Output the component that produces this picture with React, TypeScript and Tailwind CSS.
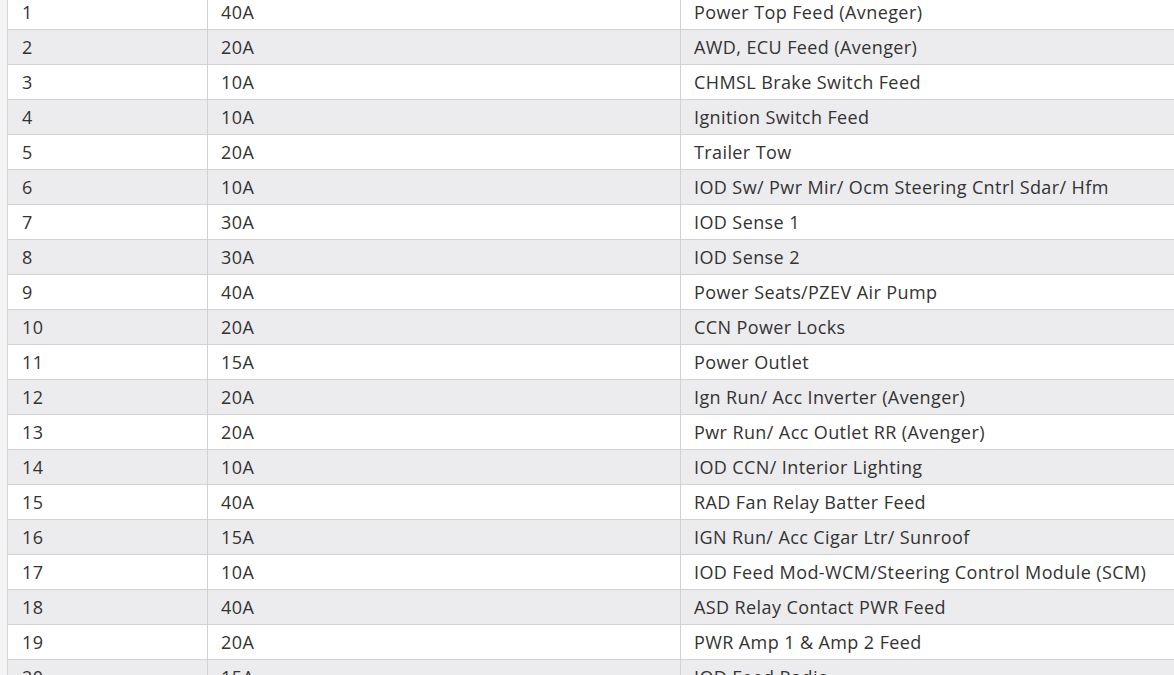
const fuses: [string, string, string][] = [
  ['1', '40A', 'Power Top Feed (Avneger)'],
  ['2', '20A', 'AWD, ECU Feed (Avenger)'],
  ['3', '10A', 'CHMSL Brake Switch Feed'],
  ['4', '10A', 'Ignition Switch Feed'],
  ['5', '20A', 'Trailer Tow'],
  ['6', '10A', 'IOD Sw/ Pwr Mir/ Ocm Steering Cntrl Sdar/ Hfm'],
  ['7', '30A', 'IOD Sense 1'],
  ['8', '30A', 'IOD Sense 2'],
  ['9', '40A', 'Power Seats/PZEV Air Pump'],
  ['10', '20A', 'CCN Power Locks'],
  ['11', '15A', 'Power Outlet'],
  ['12', '20A', 'Ign Run/ Acc Inverter (Avenger)'],
  ['13', '20A', 'Pwr Run/ Acc Outlet RR (Avenger)'],
  ['14', '10A', 'IOD CCN/ Interior Lighting'],
  ['15', '40A', 'RAD Fan Relay Batter Feed'],
  ['16', '15A', 'IGN Run/ Acc Cigar Ltr/ Sunroof'],
  ['17', '10A', 'IOD Feed Mod-WCM/Steering Control Module (SCM)'],
  ['18', '40A', 'ASD Relay Contact PWR Feed'],
  ['19', '20A', 'PWR Amp 1 & Amp 2 Feed'],
  ['20', '15A', 'IOD Feed Radio'],
];

export default function App() {
  return (
    <div className="flex h-[675px] w-[1174px] overflow-hidden bg-white font-['Open_Sans',sans-serif] text-[18px] tracking-[0.4px] text-[#333]">
      <div className="w-[7px] shrink-0 bg-[#f4f4f4]" />
      <div className="-mt-[5px] flex-1 border-l border-[#d4d4d4]">
        {fuses.map(([n, amp, desc], i) => (
          <div
            key={n}
            className={`grid h-[35px] grid-cols-[199px_473px_1fr] border-b border-[#d2d2d2] ${
              i % 2 === 1 ? 'bg-[#ececee]' : 'bg-white'
            }`}
          >
            <div className="flex items-center pl-[14px] pt-px">{n}</div>
            <div className="flex items-center border-l border-[#d2d2d2] pl-[13px] pt-px">{amp}</div>
            <div className="flex items-center whitespace-nowrap border-l border-[#d2d2d2] pl-[13px] pt-px">{desc}</div>
          </div>
        ))}
      </div>
    </div>
  );
}
